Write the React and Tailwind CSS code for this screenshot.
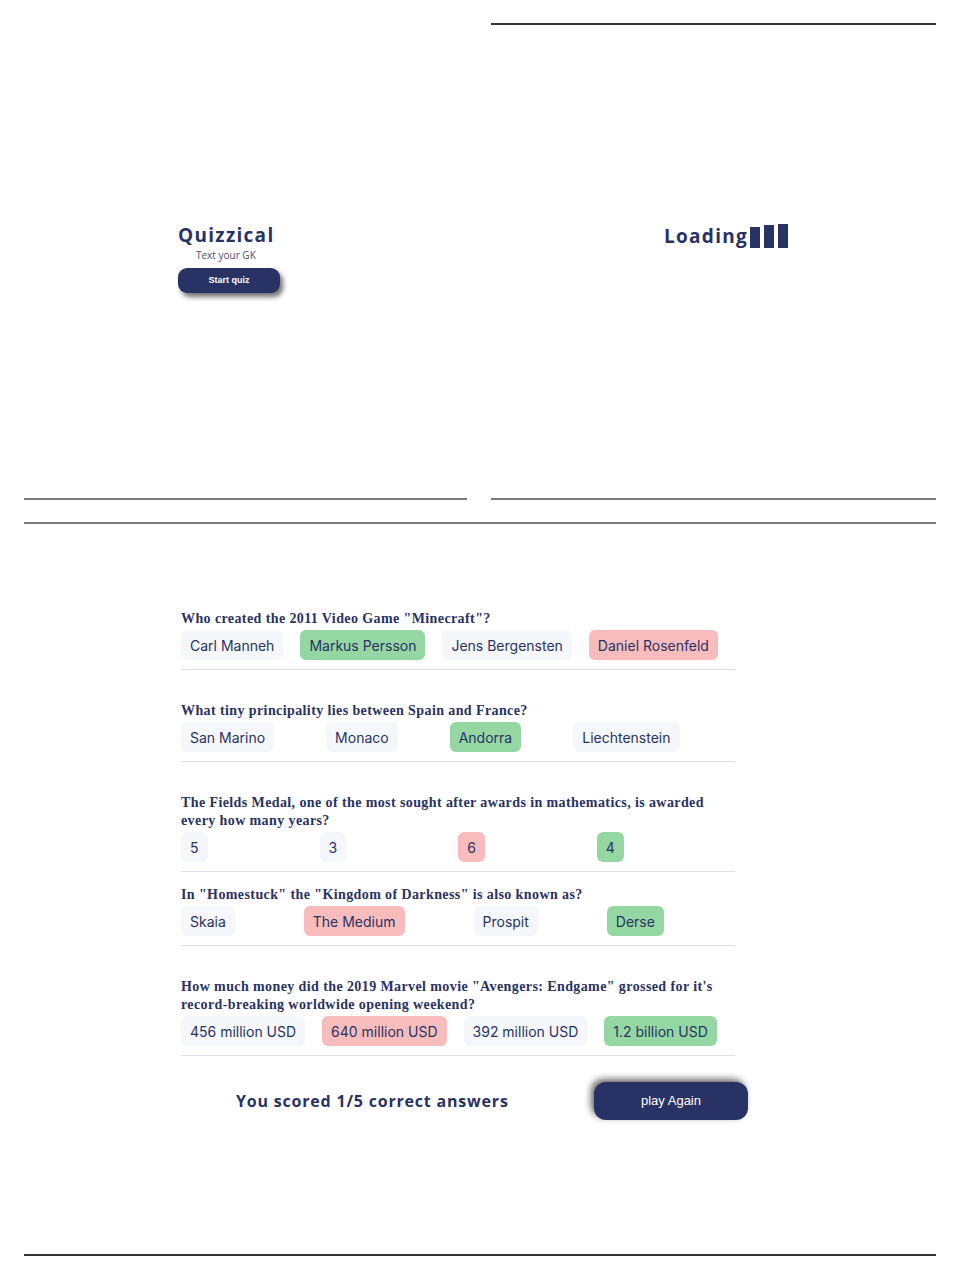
const questions = [
  {
    text: 'Who created the 2011 Video Game "Minecraft"?',
    gap: 'gap-[17px]',
    answers: [
      { label: 'Carl Manneh' },
      { label: 'Markus Persson', state: 'right' },
      { label: 'Jens Bergensten' },
      { label: 'Daniel Rosenfeld', state: 'wrong' },
    ],
  },
  {
    text: 'What tiny principality lies between Spain and France?',
    gap: 'gap-[52px]',
    answers: [
      { label: 'San Marino' },
      { label: 'Monaco' },
      { label: 'Andorra', state: 'right' },
      { label: 'Liechtenstein' },
    ],
  },
  {
    text: 'The Fields Medal, one of the most sought after awards in mathematics, is awarded every how many years?',
    gap: 'gap-[112px]',
    answers: [
      { label: '5' },
      { label: '3' },
      { label: '6', state: 'wrong' },
      { label: '4', state: 'right' },
    ],
  },
  {
    text: 'In "Homestuck" the "Kingdom of Darkness" is also known as?',
    gap: 'gap-[69px]',
    answers: [
      { label: 'Skaia' },
      { label: 'The Medium', state: 'wrong' },
      { label: 'Prospit' },
      { label: 'Derse', state: 'right' },
    ],
  },
  {
    text: 'How much money did the 2019 Marvel movie "Avengers: Endgame" grossed for it\'s record-breaking worldwide opening weekend?',
    gap: 'gap-[17px]',
    answers: [
      { label: '456 million USD' },
      { label: '640 million USD', state: 'wrong' },
      { label: '392 million USD' },
      { label: '1.2 billion USD', state: 'right' },
    ],
  },
]

function Answer({ label, state }) {
  const bg =
    state === 'right' ? 'bg-[#94d7a2]' : state === 'wrong' ? 'bg-[#f8bcbc]' : 'bg-[#f5f7fb]'
  return (
    <div className={`${bg} h-[30px] px-[9px] rounded-[6px] flex items-center text-[14px] text-[#293264] whitespace-nowrap`}>
      {label}
    </div>
  )
}

function Question({ text, gap, answers }) {
  return (
    <div className="h-[92px]">
      <p className="font-['Liberation_Serif',serif] font-bold text-[14px] leading-[18px] tracking-[0.4px] text-[#293264]">{text}</p>
      <div className={`flex ${gap} mt-[2px]`}>
        {answers.map((a) => (
          <Answer key={a.label} {...a} />
        ))}
      </div>
      <div className="mt-[9px] h-px bg-[#dbdef0]" />
    </div>
  )
}

function Rule({ dark }) {
  return <div className={`h-[2px] ${dark ? 'bg-[#333]' : 'bg-[#7a7a7a]'}`} />
}

export default function App() {
  return (
    <div className="w-[960px] h-[1280px] bg-white font-['Inter',sans-serif] px-[24px]">
      <div className="flex gap-[24px]">
        {/* start screen */}
        <div className="w-[443px] h-[500px] flex flex-col">
          <div className="flex-1 pl-[154px] pt-[224px]">
            <div className="w-[102px] flex flex-col items-start">
              <h1 className="font-['Open_Sans',sans-serif] font-bold text-[19px] leading-[22px] tracking-[1.3px] text-[#293264]">
                Quizzical
              </h1>
              <p className="ml-[18px] font-['Open_Sans',sans-serif] text-[10px] leading-[14px] text-[#4a4f72] mt-[2px]">Text your GK</p>
              <button className="mt-[6px] w-[102px] h-[25px] rounded-[9px] bg-[#293264] text-white text-[9px] font-bold font-['Liberation_Sans',sans-serif] shadow-[3px_4px_5px_rgba(0,0,0,0.55)]">
                Start quiz
              </button>
            </div>
          </div>
          <Rule />
        </div>

        {/* loading screen */}
        <div className="w-[445px] h-[500px] flex flex-col pt-[23px]">
          <Rule dark />
          <div className="flex-1 pl-[173px] pt-[199px]">
            <div className="flex items-end gap-[2px]">
              <span className="font-['Open_Sans',sans-serif] font-bold text-[19px] leading-[22px] tracking-[1.3px] text-[#293264]">
                Loading
              </span>
              <div className="flex items-end gap-[4px] mb-[-1px]">
                <div className="w-[10px] h-[21px] bg-[#293264]" />
                <div className="w-[10px] h-[23px] bg-[#293264]" />
                <div className="w-[10px] h-[24px] bg-[#293264]" />
              </div>
            </div>
          </div>
          <Rule />
        </div>
      </div>

      {/* results screen */}
      <div className="mt-[22px] h-[734px] flex flex-col">
        <Rule />
        <div className="flex-1 pl-[157px] pt-[86px]">
          <div className="w-[554px]">
            {questions.map((q) => (
              <Question key={q.text} {...q} />
            ))}
          </div>
          <div className="mt-[12px] ml-[55px] w-[512px] flex items-center justify-between">
            <span className="font-['Open_Sans',sans-serif] font-bold text-[16px] tracking-[0.8px] text-[#293264] whitespace-nowrap">
              You scored 1/5 correct answers
            </span>
            <button className="w-[154px] h-[38px] rounded-[12px] bg-[#293264] text-white text-[13px] font-['Liberation_Sans',sans-serif] shadow-[-3px_-3px_7px_rgba(0,0,0,0.6)]">
              play Again
            </button>
          </div>
        </div>
        <Rule dark />
      </div>
    </div>
  )
}
